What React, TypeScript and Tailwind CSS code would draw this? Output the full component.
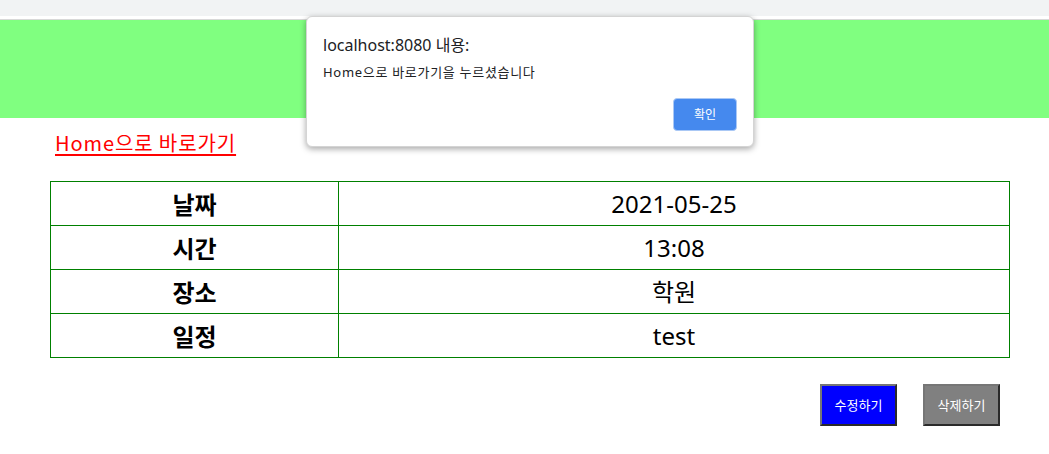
import React from "react";

const rows: [string, string][] = [
  ["날짜", "2021-05-25"],
  ["시간", "13:08"],
  ["장소", "학원"],
  ["일정", "test"],
];

export default function App() {
  return (
    <div className="relative w-[1049px] h-[454px] bg-white overflow-hidden font-['Noto_Sans','Noto_Sans_CJK_KR',sans-serif]">
      <div className="h-[16px] bg-[#f1f3f4]" />
      <div className="h-[3px] bg-white" />
      <div className="h-[1px] bg-[#d8d8d8]" />
      <div className="h-[98px] bg-[#80ff80]" />
      <div className="pl-[55px] pt-[11px] h-[63px]">
        <a href="#" className="text-[20px] leading-[28px] tracking-[0.9px] text-[#ff0000] underline decoration-[1.5px] underline-offset-[3px] font-['Noto_Sans_CJK_KR',sans-serif]">
          Home으로 바로가기
        </a>
      </div>
      <div className="px-[50px]">
        <table className="w-[960px] border-collapse border border-[#008000] font-['Noto_Sans_CJK_KR',sans-serif]">
          <tbody>
            {rows.map(([k, v]) => (
              <tr key={k} className="h-[44px]">
                <td className="w-[288px] border border-[#008000] text-center text-[24px] font-bold text-black p-0 leading-none">{k}</td>
                <td className="border border-[#008000] text-center text-[24px] text-black p-0 leading-none font-['Noto_Sans','Noto_Sans_CJK_KR',sans-serif]">{v}</td>
              </tr>
            ))}
          </tbody>
        </table>
      </div>
      <div className="flex justify-end gap-[26px] pr-[49px] pt-[26px]">
        <button className="w-[77px] h-[42px] bg-[#0000ff] text-white text-[13px] border-2 border-t-[#767676] border-l-[#767676] border-b-[#2a2a2a] border-r-[#2a2a2a] font-['Noto_Sans_CJK_KR',sans-serif]">수정하기</button>
        <button className="w-[77px] h-[42px] bg-[#808080] text-white text-[13px] border-2 border-t-[#767676] border-l-[#767676] border-b-[#2a2a2a] border-r-[#2a2a2a] font-['Noto_Sans_CJK_KR',sans-serif]">삭제하기</button>
      </div>

      <div className="absolute left-[306px] top-[16px] w-[448px] h-[131px] bg-white rounded-[6px] border border-[#d4d4d4] shadow-[0_2px_6px_rgba(0,0,0,0.35)] px-[16px] pt-[17px]">
        <div className="text-[16px] leading-[22px] text-[#202124]">localhost:8080 내용:</div>
        <div className="mt-[7px] text-[13px] leading-[18px] tracking-[0.7px] text-[#202124]">Home으로 바로가기을 누르셨습니다</div>
        <div className="flex justify-end mt-[17px]">
          <button className="w-[64px] h-[33px] rounded-[4px] bg-[#4589ee] text-white text-[12px] border border-[#aac8f5]">확인</button>
        </div>
      </div>
    </div>
  );
}
